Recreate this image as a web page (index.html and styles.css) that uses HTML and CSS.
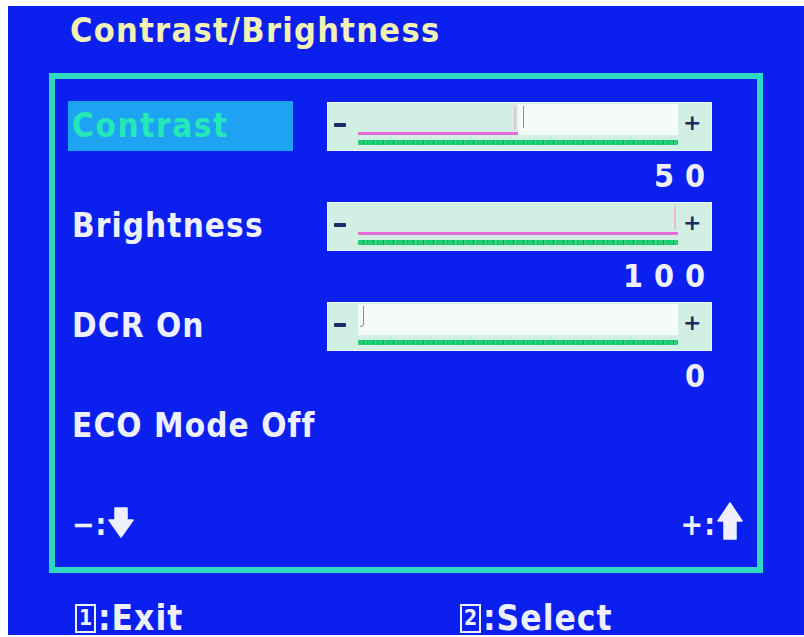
FILE: index.html
```html
<!DOCTYPE html>
<html>
<head>
<meta charset="utf-8">
<link rel="stylesheet" href="styles.css">
</head>
<body>
<div class="screen">
  <div class="title">Contrast/Brightness</div>
  <div class="frame">
    <div class="grid">
      <div class="label selected"><span>Contrast</span></div>
      <div class="slider">
        <span class="minus"></span>
        <div class="track">
          <div class="upper"><div class="fill" style="width:50%"></div></div>
          <div class="green"></div>
        </div>
        <span class="plus">+</span>
      </div>
      <div class="spacer"></div>
      <div class="value">50</div>

      <div class="label">Brightness</div>
      <div class="slider">
        <span class="minus"></span>
        <div class="track">
          <div class="upper"><div class="fill full" style="width:100%"></div></div>
          <div class="green"></div>
        </div>
        <span class="plus">+</span>
      </div>
      <div class="spacer"></div>
      <div class="value">100</div>

      <div class="label">DCR On</div>
      <div class="slider">
        <span class="minus"></span>
        <div class="track">
          <div class="upper"><div class="fill zero" style="width:0%"></div></div>
          <div class="green"></div>
        </div>
        <span class="plus">+</span>
      </div>
      <div class="spacer"></div>
      <div class="value">0</div>

      <div class="label">ECO Mode Off</div>
    </div>
    <div class="arrows">
      <div class="hint">
        <span class="sym">−:</span>
        <svg class="arrow down" width="26" height="31" viewBox="0 0 26 31"><path d="M7 1 H19 V13 H25 L13 30 L1 13 H7 Z" fill="#eef0ff" stroke="#eef0ff" stroke-width="1.5" stroke-linejoin="round"/></svg>
      </div>
      <div class="hint">
        <span class="sym">+:</span>
        <svg class="arrow" width="26" height="38" viewBox="0 0 26 38"><path d="M13 1 L25 19 H19 V37 H7 V19 H1 Z" fill="#eef0ff" stroke="#eef0ff" stroke-width="1.5" stroke-linejoin="round"/></svg>
      </div>
    </div>
  </div>
  <div class="footer">
    <div class="key exit"><span class="box">1</span>:Exit</div>
    <div class="key"><span class="box">2</span>:Select</div>
  </div>
</div>
</body>
</html>
```

FILE: styles.css
```css
html, body {
  margin: 0;
  padding: 0;
  background: #ffffff;
}

body {
  font-family: "DejaVu Sans Condensed", "DejaVu Sans", "Liberation Sans", sans-serif;
  font-stretch: condensed;
  font-weight: bold;
  color: #eef0ff;
}

.screen {
  margin: 6px 0 0 8px;
  height: 629px;
  background: #0b20ee;
  display: flex;
  flex-direction: column;
}

.title {
  height: 67px;
  box-sizing: border-box;
  padding: 4px 0 0 62px;
  font-size: 34px;
  line-height: 40px;
  color: #f2f0b2;
  letter-spacing: 1.3px;
}

.frame {
  margin-left: 41px;
  width: 714px;
  height: 500px;
  box-sizing: border-box;
  border: 6px solid #2fd8c2;
  display: flex;
  flex-direction: column;
  flex: none;
}

.grid {
  display: grid;
  grid-template-columns: 259px 385px;
  grid-auto-rows: 50px;
  padding: 22px 0 0 13px;
  align-items: center;
}

.label {
  font-size: 33px;
  line-height: 50px;
  padding-left: 4px;
  letter-spacing: 1.1px;
}

.label.selected {
  width: 225px;
  height: 50px;
  box-sizing: border-box;
  background: #1ea2f2;
  color: #24e8b8;
  letter-spacing: 1.6px;
}

.slider {
  height: 49px;
  margin-top: 1px;
  box-sizing: border-box;
  background: #d2efe3;
  border: 1px solid #e6f8f0;
  display: grid;
  grid-template-columns: 30px 320px 1fr;
  align-items: start;
}

.minus {
  display: block;
  width: 12px;
  height: 4px;
  margin: 20px 0 0 6px;
  background: #1d2a66;
  border-radius: 1px;
}

.plus {
  display: block;
  font-size: 22px;
  line-height: 22px;
  margin-top: 9px;
  padding-left: 5px;
  color: #1d2a66;
  font-family: "DejaVu Sans", sans-serif;
  font-stretch: normal;
}

.track {
  display: flex;
  flex-direction: column;
  padding-top: 1px;
}

.upper {
  height: 31px;
  background: #f5fbf8;
  display: flex;
}

.fill {
  height: 100%;
  box-sizing: border-box;
  background: #d2efe3;
  border-bottom: 3px solid #e46cd6;
  position: relative;
}

.fill::before {
  content: "";
  position: absolute;
  right: 2px;
  top: 2px;
  width: 2px;
  height: 24px;
  background: #f1b8d8;
}

.fill::after {
  content: "";
  position: absolute;
  right: -6px;
  top: 2px;
  width: 1px;
  height: 22px;
  background: #8a8f98;
}

.fill.full::after {
  display: none;
}

.fill.zero {
  border-bottom: none;
}

.fill.zero::before {
  display: none;
}

.fill.zero::after {
  right: -6px;
  width: 3px;
  height: 20px;
  background: transparent;
  border-right: 1px solid #8a8f98;
  border-bottom: 1px solid #8a8f98;
  border-bottom-right-radius: 4px;
}

.green {
  height: 5px;
  margin-top: 5px;
  background:
    repeating-linear-gradient(to right, #1fcf70 0 5px, #3f8a5a 5px 6px, #2ad37a 6px 9px, #5d9a70 9px 10px);
  border-radius: 1px;
}

.spacer {
  height: 50px;
}

.value {
  text-align: right;
  font-size: 32px;
  line-height: 50px;
  letter-spacing: 11px;
  margin-right: -4px;
}

.arrows {
  margin-top: auto;
  margin-bottom: 27px;
  display: flex;
  justify-content: space-between;
  align-items: flex-end;
  padding: 0 14px 0 17px;
}

.hint {
  display: flex;
  align-items: flex-end;
  gap: 1px;
}

.arrow.down {
  margin-bottom: 2px;
}

.sym {
  font-size: 30px;
  line-height: 30px;
  letter-spacing: 1px;
}

.footer {
  flex: 1;
  display: flex;
  align-items: flex-end;
  padding-left: 67px;
}

.key {
  flex: none;
  font-size: 35px;
  line-height: 34px;
  display: flex;
  align-items: center;
  letter-spacing: 1px;
}

.key.exit {
  width: 385px;
}

.box {
  display: inline-block;
  width: 17px;
  height: 25px;
  border: 2px solid #eef0ff;
  font-size: 21px;
  line-height: 25px;
  text-align: center;
  letter-spacing: 0;
  margin-right: 2px;
}
```
